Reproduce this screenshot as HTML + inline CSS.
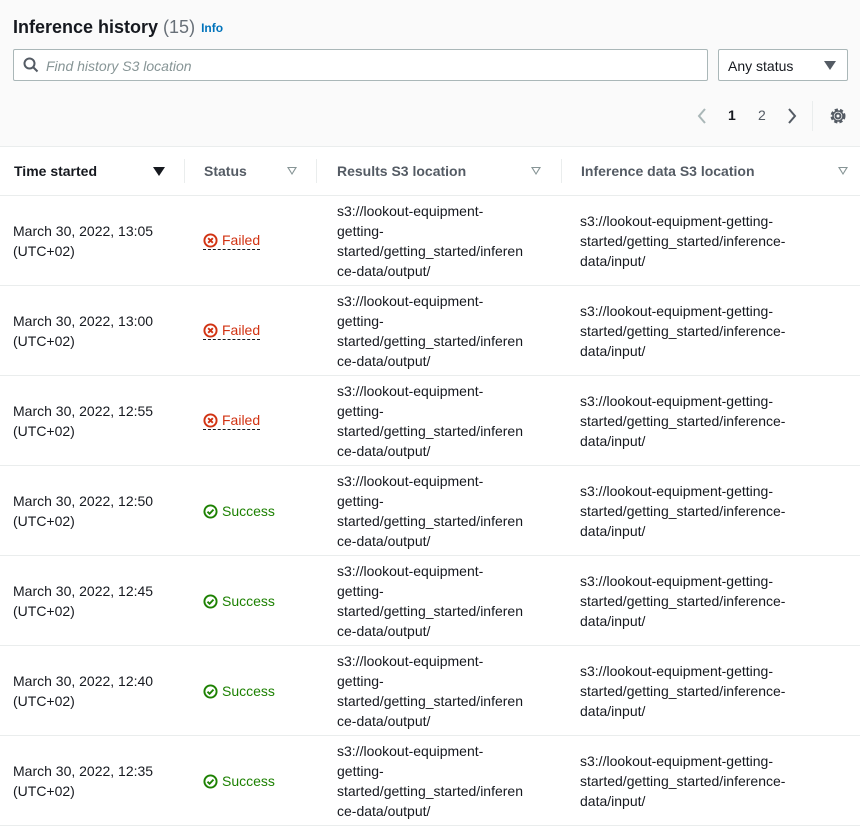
<!DOCTYPE html>
<html><head><style>
*{box-sizing:border-box;margin:0;padding:0}
body{width:860px;height:820px;overflow:hidden;font-family:"Liberation Sans",sans-serif;font-size:14px;color:#16191f;background:#fff}
.top{background:#fafafa;height:147px;border-bottom:1px solid #eaeded;position:relative}
h1{position:absolute;left:13px;top:17px;font-size:18px;font-weight:bold;color:#16191f}
h1 span.c{font-weight:normal;color:#687078}
h1 span.i{font-size:12px;color:#0073bb;font-weight:bold;margin-left:6px;vertical-align:1px}
.search{position:absolute;left:13px;top:49px;width:695px;height:32px;border:1px solid #aab7b8;border-radius:2px;background:#fff}
.search span{position:absolute;left:32px;top:8px;font-style:italic;color:#879596}
.sel{position:absolute;left:718px;top:49px;width:130px;height:32px;border:1px solid #aab7b8;border-radius:2px;background:#fff;padding:8px 9px;color:#16191f}
.sel:after{content:"";position:absolute;right:11px;top:11px;border-left:6px solid transparent;border-right:6px solid transparent;border-top:9px solid #545b64}
.pg{position:absolute;top:107px;font-size:14px}
.hdr{position:relative;height:49px;border-bottom:1px solid #eaeded;font-weight:bold;color:#545b64}
.hdr .l{position:absolute;top:16px}
.sep{position:absolute;top:12px;width:1px;height:24px;background:#eaeded}
.hdr .tri{position:absolute;top:20px;width:0;height:0;border-left:5px solid transparent;border-right:5px solid transparent;border-top:8px solid #879596}
.tri.o:after{content:"";position:absolute;left:-3px;top:-7px;border-left:3px solid transparent;border-right:3px solid transparent;border-top:5px solid #fff}
.row{position:relative;height:90px;border-bottom:1px solid #eaeded;line-height:20px}
.row>div{position:absolute}
.c1{left:13px;top:25px}
.c2{left:203px;top:35px}
.c3{left:337px;top:5px}
.c4{left:580px;top:15px}
.f{color:#d13212;border-bottom:1px dashed #16191f;line-height:18px;display:inline-flex;align-items:center;gap:4px}
.s{color:#1d8102;display:inline-flex;align-items:center;gap:4px}
</style></head><body>
<div class="top">
<h1>Inference history <span class="c">(15)</span><span class="i">Info</span></h1>
<div class="search"><svg style="position:absolute;left:9px;top:7px" width="16" height="16" viewBox="0 0 16 16"><circle cx="6.5" cy="6.5" r="5" fill="none" stroke="#545b64" stroke-width="2"/><path d="M10 10l4.5 4.5" stroke="#545b64" stroke-width="2"/></svg><span>Find history S3 location</span></div>
<div class="sel">Any status</div>
<svg style="position:absolute;left:696px;top:108px" width="12" height="16" viewBox="0 0 12 16"><path d="M9 1L3 8l6 7" fill="none" stroke="#aab7b8" stroke-width="2"/></svg>
<div class="pg" style="left:728px;color:#16191f;font-weight:bold">1</div>
<div class="pg" style="left:758px;color:#545b64">2</div>
<svg style="position:absolute;left:786px;top:108px" width="12" height="16" viewBox="0 0 12 16"><path d="M3 1l6 7-6 7" fill="none" stroke="#545b64" stroke-width="2"/></svg>
<div style="position:absolute;left:812px;top:101px;width:1px;height:30px;background:#eaeded"></div>
<svg style="position:absolute;left:829px;top:107px" width="18" height="18" viewBox="0 0 18 18"><circle cx="9" cy="9" r="2.5" fill="none" stroke="#545b64" stroke-width="2"/><circle cx="9" cy="9" r="6" fill="none" stroke="#545b64" stroke-width="3" stroke-dasharray="3 2"/><circle cx="9" cy="9" r="5" fill="none" stroke="#545b64" stroke-width="1.5"/></svg>
</div>
<div class="hdr">
<div class="l" style="left:14px;color:#16191f">Time started</div>
<div class="tri" style="left:153px;border-top-color:#16191f;border-left-width:6px;border-right-width:6px;border-top-width:9px"></div>
<div class="sep" style="left:184px"></div>
<div class="l" style="left:204px">Status</div><div class="tri o" style="left:287px"></div>
<div class="sep" style="left:316px"></div>
<div class="l" style="left:337px">Results S3 location</div><div class="tri o" style="left:531px"></div>
<div class="sep" style="left:561px"></div>
<div class="l" style="left:581px">Inference data S3 location</div><div class="tri o" style="left:838px"></div>
</div>
<div id="rows"></div>
<script>
var t=["13:05","13:00","12:55","12:50","12:45","12:40","12:35"],h="";
var fx='<svg width="15" height="15" viewBox="0 0 16 16"><circle cx="8" cy="8" r="6.5" fill="none" stroke="#d13212" stroke-width="2"/><path d="M5.5 5.5l5 5M10.5 5.5l-5 5" stroke="#d13212" stroke-width="2"/></svg>';
var ok='<svg width="15" height="15" viewBox="0 0 16 16"><circle cx="8" cy="8" r="6.5" fill="none" stroke="#1d8102" stroke-width="2"/><path d="M4.8 8.2l2.2 2.2 4.2-4.4" fill="none" stroke="#1d8102" stroke-width="2"/></svg>';
for(var i=0;i<7;i++){h+='<div class="row"><div class="c1">March 30, 2022, '+t[i]+'<br>(UTC+02)</div><div class="c2">'+(i<3?'<span class="f">'+fx+'Failed</span>':'<span class="s">'+ok+'Success</span>')+'</div><div class="c3">s3://lookout-equipment-<br>getting-<br>started/getting_started/inferen<br>ce-data/output/</div><div class="c4">s3://lookout-equipment-getting-<br>started/getting_started/inference-<br>data/input/</div></div>';}
document.getElementById("rows").innerHTML=h;
</script>
</body></html>
